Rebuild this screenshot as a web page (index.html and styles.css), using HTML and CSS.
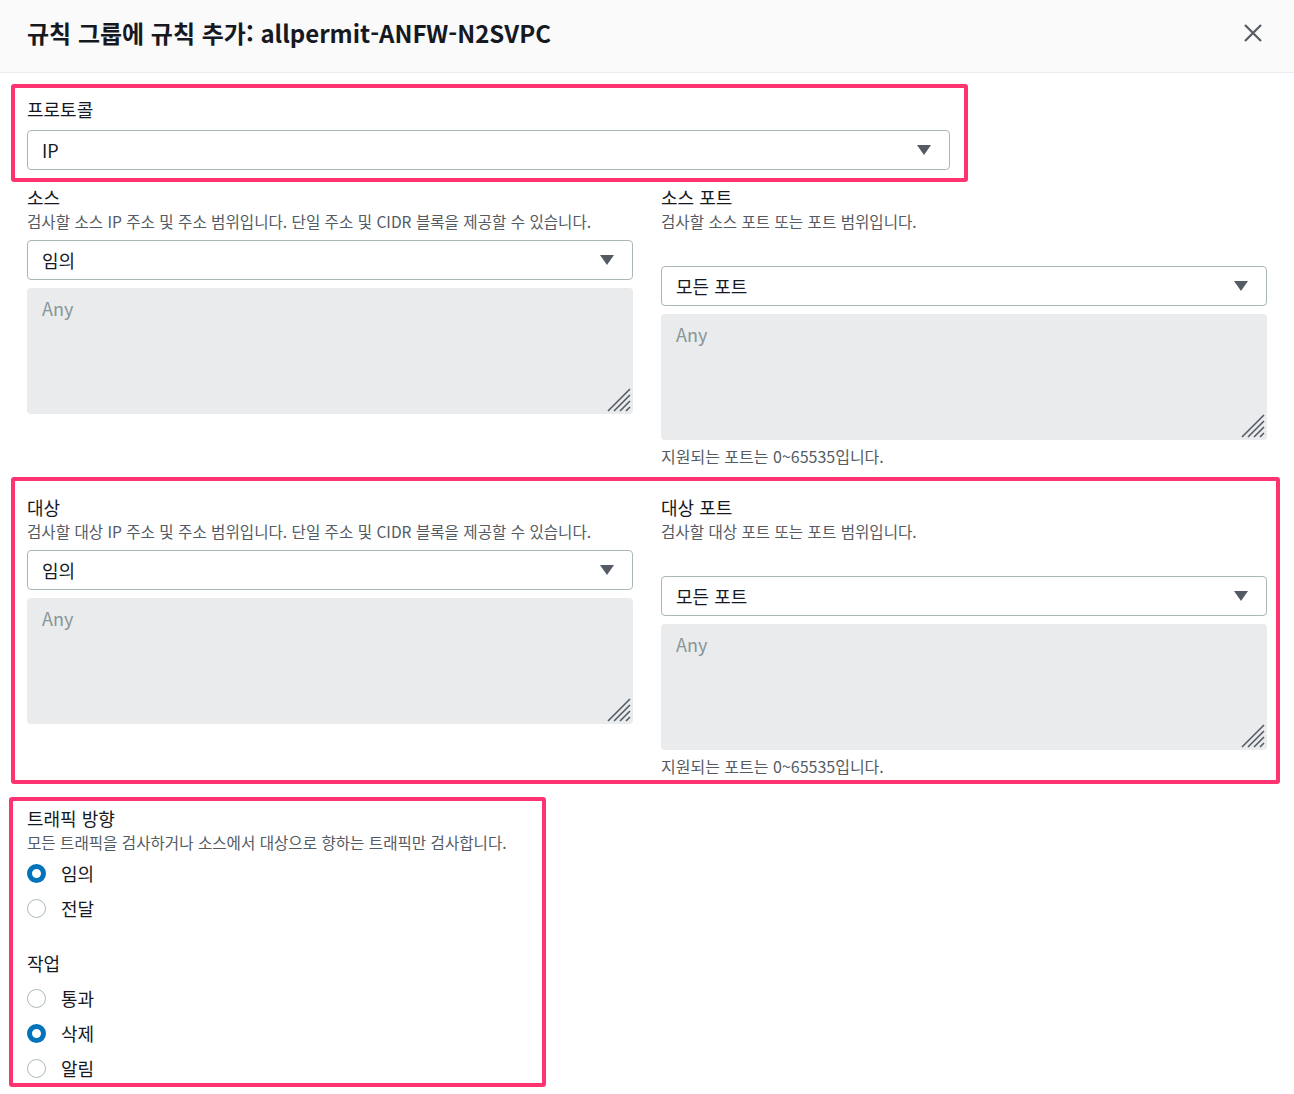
FILE: index.html
```html
<!DOCTYPE html>
<html lang="ko">
<head>
<meta charset="utf-8">
<title>규칙 그룹에 규칙 추가</title>
<link rel="stylesheet" href="styles.css">
</head>
<body>
<div class="modal">
  <header class="modal-header">
    <h1 class="modal-title">규칙 그룹에 규칙 추가: allpermit-ANFW-N2SVPC</h1>
    <button class="close-btn" aria-label="닫기">
      <svg width="20" height="20" viewBox="0 0 20 20"><path d="M2 2 L18 18 M18 2 L2 18" stroke="#545b64" stroke-width="2.2" fill="none"/></svg>
    </button>
  </header>
  <div class="modal-body">
    <section class="hl hl-protocol">
      <div class="label">프로토콜</div>
      <div class="select first-select"><span>IP</span><svg class="caret" width="14" height="10" viewBox="0 0 14 10"><path d="M0 0 H14 L7 10 Z" fill="#545b64"/></svg></div>
    </section>

    <div class="row row-source">
      <div class="field">
        <div class="label">소스</div>
        <div class="desc">검사할 소스 IP 주소 및 주소 범위입니다. 단일 주소 및 CIDR 블록을 제공할 수 있습니다.</div>
        <div class="select"><span>임의</span><svg class="caret" width="14" height="10" viewBox="0 0 14 10"><path d="M0 0 H14 L7 10 Z" fill="#545b64"/></svg></div>
        <div class="textarea"><span class="ph">Any</span><svg class="grip" width="24" height="24" viewBox="0 0 24 24"><path d="M1 23 L23 1 M7 23 L23 7 M13 23 L23 13 M19 23 L23 19" stroke="#545b64" stroke-width="1.6" fill="none"/></svg></div>
      </div>
      <div class="field">
        <div class="label">소스 포트</div>
        <div class="desc">검사할 소스 포트 또는 포트 범위입니다.</div>
        <div class="select port-select"><span>모든 포트</span><svg class="caret" width="14" height="10" viewBox="0 0 14 10"><path d="M0 0 H14 L7 10 Z" fill="#545b64"/></svg></div>
        <div class="textarea"><span class="ph">Any</span><svg class="grip" width="24" height="24" viewBox="0 0 24 24"><path d="M1 23 L23 1 M7 23 L23 7 M13 23 L23 13 M19 23 L23 19" stroke="#545b64" stroke-width="1.6" fill="none"/></svg></div>
        <div class="hint">지원되는 포트는 0~65535입니다.</div>
      </div>
    </div>

    <section class="hl hl-dest">
      <div class="row">
        <div class="field">
          <div class="label">대상</div>
          <div class="desc">검사할 대상 IP 주소 및 주소 범위입니다. 단일 주소 및 CIDR 블록을 제공할 수 있습니다.</div>
          <div class="select"><span>임의</span><svg class="caret" width="14" height="10" viewBox="0 0 14 10"><path d="M0 0 H14 L7 10 Z" fill="#545b64"/></svg></div>
          <div class="textarea"><span class="ph">Any</span><svg class="grip" width="24" height="24" viewBox="0 0 24 24"><path d="M1 23 L23 1 M7 23 L23 7 M13 23 L23 13 M19 23 L23 19" stroke="#545b64" stroke-width="1.6" fill="none"/></svg></div>
        </div>
        <div class="field">
          <div class="label">대상 포트</div>
          <div class="desc">검사할 대상 포트 또는 포트 범위입니다.</div>
          <div class="select port-select"><span>모든 포트</span><svg class="caret" width="14" height="10" viewBox="0 0 14 10"><path d="M0 0 H14 L7 10 Z" fill="#545b64"/></svg></div>
          <div class="textarea"><span class="ph">Any</span><svg class="grip" width="24" height="24" viewBox="0 0 24 24"><path d="M1 23 L23 1 M7 23 L23 7 M13 23 L23 13 M19 23 L23 19" stroke="#545b64" stroke-width="1.6" fill="none"/></svg></div>
          <div class="hint">지원되는 포트는 0~65535입니다.</div>
        </div>
      </div>
    </section>

    <section class="hl hl-traffic">
      <div class="label">트래픽 방향</div>
      <div class="desc">모든 트래픽을 검사하거나 소스에서 대상으로 향하는 트래픽만 검사합니다.</div>
      <div class="radios">
        <label class="radio"><span class="dot checked"></span><span>임의</span></label>
        <label class="radio"><span class="dot"></span><span>전달</span></label>
      </div>
      <div class="label action-label">작업</div>
      <div class="radios action-radios">
        <label class="radio"><span class="dot"></span><span>통과</span></label>
        <label class="radio"><span class="dot checked"></span><span>삭제</span></label>
        <label class="radio"><span class="dot"></span><span>알림</span></label>
      </div>
    </section>
  </div>
</div>
</body>
</html>
```

FILE: styles.css
```css
* { box-sizing: border-box; }
html, body { margin: 0; padding: 0; background: #ffffff; }
body {
  font-family: "Noto Sans CJK KR", "Noto Sans", sans-serif;
  color: #16191f;
  font-size: 18px;
}
.modal { width: 1294px; }
.modal-header {
  height: 73px;
  background: #fafafa;
  border-bottom: 1px solid #e9ebed;
  display: flex;
  align-items: center;
  justify-content: space-between;
  padding: 0 31px 6px 27px;
}
.modal-title {
  margin: 0;
  font-size: 24px;
  font-weight: 700;
  line-height: 30px;
  color: #16191f;
}
.close-btn {
  border: 0;
  background: none;
  padding: 0;
  width: 20px;
  height: 20px;
  display: flex;
}
.modal-body { padding: 11px 0 0 11px; }
.hl {
  border: 4px solid #ff3370;
  border-radius: 3px;
}
.hl-protocol {
  width: 957px;
  padding: 10px 14px 8px 12px;
}
.label {
  font-size: 18px;
  line-height: 22px;
  color: #16191f;
}
.desc, .hint {
  font-size: 15.6px;
  line-height: 20px;
  color: #545b64;
}
.hint { font-size: 16px; }
.desc { margin-top: 3px; }
.select {
  height: 40px;
  border: 1px solid #aab7b8;
  border-radius: 4px;
  background: #fff;
  display: flex;
  align-items: center;
  justify-content: space-between;
  padding: 0 18px 0 14px;
  margin-top: 9px;
  font-size: 18px;
}
.first-select { margin-top: 10px; }
.port-select { margin-top: 35px; }
.textarea {
  position: relative;
  height: 126px;
  margin-top: 8px;
  background: #e9ebed;
  border-radius: 4px;
  padding: 9px 15px;
  line-height: 22px;
}
.ph { color: #879596; font-size: 18px; }
.grip { position: absolute; right: 2px; bottom: 2px; }
.hint { margin-top: 6px; }
.row {
  display: grid;
  grid-template-columns: 606px 606px;
  column-gap: 28px;
}
.row-source { padding: 4px 0 0 16px; }
.hl-dest {
  margin-top: 11px;
  width: 1269px;
  padding: 15px 9px 4px 12px;
}
.hl-traffic {
  margin: 13px 0 0 -2px;
  width: 537px;
  padding: 6px 12px 3px 14px;
}
.radios {
  display: flex;
  flex-direction: column;
  gap: 11px;
  margin-top: 9px;
}
.radio {
  display: flex;
  align-items: center;
  height: 24px;
  line-height: 24px;
  font-size: 18px;
  gap: 15px;
}
.dot {
  width: 19px;
  height: 19px;
  border-radius: 50%;
  border: 1.5px solid #aab7b8;
  background: #fff;
  flex: none;
}
.dot.checked { border: 5.5px solid #0073bb; }
.action-label { margin-top: 32px; }
.action-radios { margin-top: 12px; }
```
